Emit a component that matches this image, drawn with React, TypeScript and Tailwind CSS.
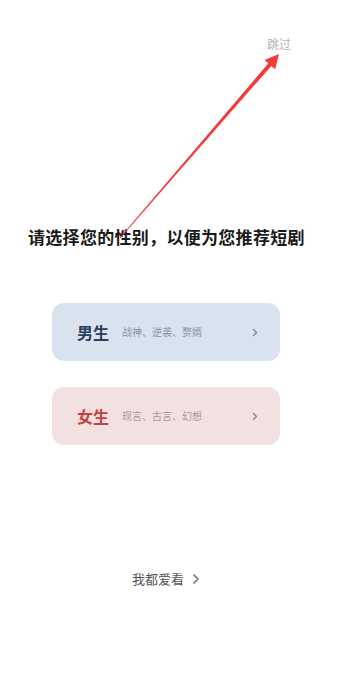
const font = { fontFamily: '"Noto Sans CJK SC", "Noto Sans", sans-serif' };

interface GenderCardProps {
  title: string;
  tags: string;
  bg: string;
  titleColor: string;
  tagColor: string;
}

const Chevron = ({ className }: { className: string }) => (
  <svg viewBox="0 0 8 12" className={className} fill="none">
    <path d="M2 2l4 4-4 4" stroke="currentColor" strokeWidth="1.8" strokeLinecap="round" strokeLinejoin="round" />
  </svg>
);

const GenderCard = ({ title, tags, bg, titleColor, tagColor }: GenderCardProps) => (
  <div className={`flex items-center h-[58px] w-[228px] rounded-[12px] pl-[25px] pr-[22px] ${bg}`}>
    <span className={`text-[16px] leading-[20px] font-bold ${titleColor}`}>{title}</span>
    <span className={`ml-[13px] text-[10px] leading-[14px] ${tagColor}`}>{tags}</span>
    <Chevron className="ml-auto w-[6px] h-[9px] text-[#7d8592]" />
  </div>
);

export default function App() {
  return (
    <div className="relative w-full h-[682px] bg-white overflow-hidden" style={font}>
      {/* Skip */}
      <div className="flex justify-end pt-[37px] pr-[51px]">
        <span className="text-[12px] leading-[14px] text-[#b2b2b2]">跳过</span>
      </div>

      {/* Title */}
      <div className="mt-[174px] pl-[28px]">
        <h1 className="text-[17px] leading-[24px] font-bold text-[#1a1a1a] tracking-[0.3px]">
          请选择您的性别，以便为您推荐短剧
        </h1>
      </div>

      {/* Gender cards */}
      <div className="mt-[54px] ml-[52px] flex flex-col gap-[26px]">
        <GenderCard
          title="男生"
          tags="战神、逆袭、赘婿"
          bg="bg-[#d9e3ef]"
          titleColor="text-[#2c3d5b]"
          tagColor="text-[#8a93a3]"
        />
        <GenderCard
          title="女生"
          tags="现言、古言、幻想"
          bg="bg-[#f3e0e1]"
          titleColor="text-[#c8413f]"
          tagColor="text-[#a9979a]"
        />
      </div>

      {/* Like all */}
      <div className="mt-[124px] pl-[132px] flex items-center">
        <span className="text-[13px] leading-[20px] text-[#555555]">我都爱看</span>
        <Chevron className="ml-[8px] w-[8px] h-[12px] text-[#8c8c8c]" />
      </div>

      {/* Annotation arrow */}
      <svg className="absolute inset-0 w-[342px] h-[682px] pointer-events-none" viewBox="0 0 342 682">
        <polygon
          points="120.3,238.3 271.3,65.9 275.1,69.2 279,54 264.5,60 268.3,63.3 119.7,237.7"
          fill="#f23c3c"
        />
      </svg>
    </div>
  );
}
